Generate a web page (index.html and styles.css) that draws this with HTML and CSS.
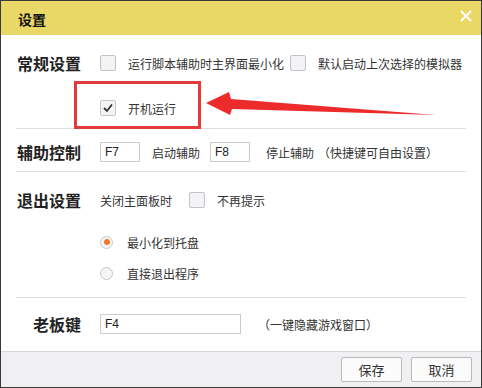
FILE: index.html
```html
<!DOCTYPE html>
<html lang="zh-CN">
<head>
    <meta charset="UTF-8">
    <title>设置</title>
    <link rel="stylesheet" href="styles.css">
</head>
<body>
    <div class="window">
        <div class="titlebar">
            <span class="title">设置</span>
            <svg class="close" width="12" height="12" viewBox="0 0 12 12">
                <path d="M1 1 L11 11 M11 1 L1 11" stroke="#ffffff" stroke-width="1.8" fill="none"/>
            </svg>
        </div>

        <div class="content">
            <!-- 常规设置 -->
            <div class="section general">
                <div class="row">
                    <div class="label">常规设置</div>
                    <span class="checkbox"></span>
                    <span class="text">运行脚本辅助时主界面最小化</span>
                    <span class="checkbox second"></span>
                    <span class="text">默认启动上次选择的模拟器</span>
                </div>
                <div class="row">
                    <div class="label"></div>
                    <span class="checkbox checked">
                        <svg width="14" height="14" viewBox="0 0 14 14"><path d="M3 7 L6 10 L11 3.5" stroke="#333" stroke-width="1.8" fill="none"/></svg>
                    </span>
                    <span class="text">开机运行</span>
                </div>
            </div>

            <!-- 辅助控制 -->
            <div class="section hotkeys">
                <div class="row">
                    <div class="label">辅助控制</div>
                    <input class="key" type="text" value="F7">
                    <span class="text gap-l">启动辅助</span>
                    <input class="key gap-m" type="text" value="F8">
                    <span class="text gap-xl">停止辅助</span>
                    <span class="text gap-s">（快捷键可自由设置）</span>
                </div>
            </div>

            <!-- 退出设置 -->
            <div class="section exit">
                <div class="row">
                    <div class="label">退出设置</div>
                    <span class="text">关闭主面板时</span>
                    <span class="checkbox third"></span>
                    <span class="text">不再提示</span>
                </div>
                <div class="row radio-row">
                    <div class="label"></div>
                    <span class="radio selected"></span>
                    <span class="text">最小化到托盘</span>
                </div>
                <div class="row radio-row">
                    <div class="label"></div>
                    <span class="radio"></span>
                    <span class="text">直接退出程序</span>
                </div>
            </div>

            <!-- 老板键 -->
            <div class="section boss">
                <div class="row">
                    <div class="label">老板键</div>
                    <input class="key wide" type="text" value="F4">
                    <span class="text gap-hint">（一键隐藏游戏窗口）</span>
                </div>
            </div>
        </div>

        <div class="footer">
            <button>保存</button>
            <button>取消</button>
        </div>

        <!-- annotation -->
        <div class="mark-box"></div>
        <svg class="mark-arrow" width="240" height="30" viewBox="200 88 240 30">
            <polygon points="206,103 229,92 231,99 436,115 232,109 230,115" fill="#ee2b2b"/>
        </svg>
    </div>
</body>
</html>
```

FILE: styles.css
```css
body {
    margin: 0;
    font-family: "Noto Sans CJK SC", "Liberation Sans", sans-serif;
    color: #333333;
    background-color: #ffffff;
}

.window {
    position: relative;
    width: 482px;
    height: 388px;
    box-sizing: border-box;
    border: 1px solid #3a3a3a;
    display: flex;
    flex-direction: column;
    background-color: #ffffff;
}

.titlebar {
    height: 34px;
    background-color: #e9d866;
    display: flex;
    align-items: center;
    justify-content: space-between;
    padding: 0 9px 0 17px;
    flex-shrink: 0;
}

.title {
    font-size: 14px;
    font-weight: bold;
    color: #111111;
    margin-top: 1px;
}

.close {
    margin-top: -5px;
}

.content {
    flex: 1;
    padding: 0 15px;
}

.section {
    border-bottom: 1px solid #dddddd;
}

.section.general {
    padding: 13px 0 5px;
}

.section.hotkeys {
    padding: 8px 0 4px;
}

.section.exit {
    padding: 13px 0 9px;
}

.section.boss {
    border-bottom: none;
    padding-top: 11px;
}

.row {
    display: flex;
    align-items: center;
    height: 30px;
}

.row + .row {
    margin-top: 15px;
}

.row + .radio-row {
    margin-top: 12px;
}

.radio-row + .radio-row {
    margin-top: 1px;
}

.label {
    width: 65px;
    margin-right: 19px;
    text-align: right;
    font-size: 16px;
    font-weight: bold;
    color: #222222;
    flex-shrink: 0;
}

.text {
    font-size: 12px;
    white-space: nowrap;
}

.checkbox {
    width: 14px;
    height: 14px;
    border: 1px solid #c4c4c8;
    border-radius: 2px;
    background-color: #f3f3f6;
    margin-right: 12px;
    display: flex;
    align-items: center;
    justify-content: center;
    flex-shrink: 0;
}

.checkbox.second {
    margin-left: 6px;
}

.checkbox.third {
    margin-left: 17px;
}

.radio {
    width: 11px;
    height: 11px;
    border: 1px solid #c8c8cc;
    border-radius: 50%;
    background-color: #f6f6f8;
    margin-right: 14px;
    display: flex;
    align-items: center;
    justify-content: center;
}

.radio.selected::after {
    content: "";
    width: 6px;
    height: 6px;
    border-radius: 50%;
    background-color: #f07a2a;
}

input.key {
    width: 40px;
    height: 20px;
    box-sizing: border-box;
    border: 1px solid #cccccc;
    padding: 0 4px;
    font-family: "Liberation Sans", sans-serif;
    font-size: 12px;
    color: #222222;
    outline: none;
}

input.key.wide {
    width: 141px;
}

.gap-l {
    margin-left: 12px;
}

.gap-m {
    margin-left: 10px;
}

.gap-xl {
    margin-left: 16px;
}

.gap-s {
    margin-left: 4px;
}

.gap-hint {
    margin-left: 17px;
}

.footer {
    height: 35px;
    background-color: #f0f0f3;
    border-top: 1px solid #d8d8da;
    display: flex;
    align-items: center;
    justify-content: flex-end;
    gap: 9px;
    padding-right: 9px;
    flex-shrink: 0;
}

.footer button {
    width: 61px;
    height: 25px;
    border: 1px solid #b9b9bc;
    border-radius: 2px;
    background-color: #fbfbfc;
    font-family: "Noto Sans CJK SC", sans-serif;
    font-size: 13px;
    color: #333333;
    padding: 0;
}

.mark-box {
    position: absolute;
    left: 73px;
    top: 80px;
    width: 121px;
    height: 42px;
    border: 3px solid #e23a3a;
}

.mark-arrow {
    position: absolute;
    left: 199px;
    top: 87px;
}
```
